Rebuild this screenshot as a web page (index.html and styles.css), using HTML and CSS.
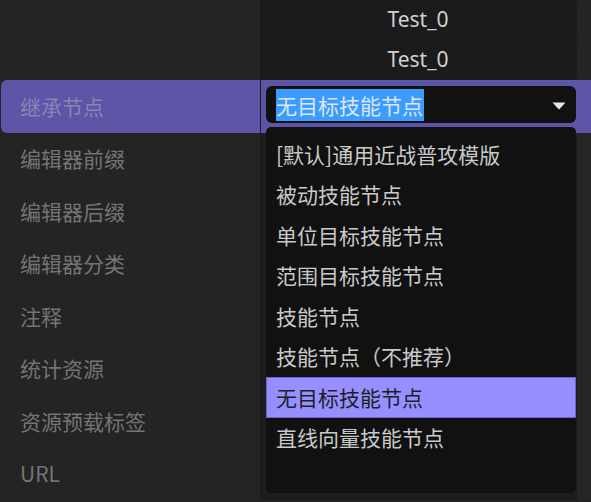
FILE: index.html
```html
<!DOCTYPE html>
<html lang="zh-CN">
<head>
<meta charset="utf-8">
<link rel="stylesheet" href="styles.css">
</head>
<body>
<div class="inspector">
  <div class="row row-top">
    <div class="label"></div>
    <div class="value value-top"><span class="value-text">Test_0</span></div>
    <div class="gutter"></div>
  </div>
  <div class="row row-top">
    <div class="label"></div>
    <div class="value value-top"><span class="value-text">Test_0</span></div>
    <div class="gutter"></div>
  </div>
  <div class="row row-selected">
    <div class="label">继承节点</div>
    <div class="value value-combo">
      <div class="combo">
        <span class="combo-text">无目标技能节点</span>
        <svg class="combo-arrow" width="14" height="9" viewBox="0 0 14 9"><path d="M0.5 1.5 H13.5 L7.6 8 Q7 8.6 6.4 8 Z" fill="#e6e6e6"/></svg>
      </div>
      <ul class="popup">
        <li class="item">[默认]通用近战普攻模版</li>
        <li class="item">被动技能节点</li>
        <li class="item">单位目标技能节点</li>
        <li class="item">范围目标技能节点</li>
        <li class="item">技能节点</li>
        <li class="item">技能节点（不推荐）</li>
        <li class="item item-active">无目标技能节点</li>
        <li class="item">直线向量技能节点</li>
      </ul>
    </div>
    <div class="gutter"></div>
  </div>
  <div class="row"><div class="label">编辑器前缀</div><div class="value"></div><div class="gutter"></div></div>
  <div class="row"><div class="label">编辑器后缀</div><div class="value"></div><div class="gutter"></div></div>
  <div class="row"><div class="label">编辑器分类</div><div class="value"></div><div class="gutter"></div></div>
  <div class="row"><div class="label">注释</div><div class="value"></div><div class="gutter"></div></div>
  <div class="row"><div class="label">统计资源</div><div class="value"></div><div class="gutter"></div></div>
  <div class="row"><div class="label">资源预载标签</div><div class="value"></div><div class="gutter"></div></div>
  <div class="row"><div class="label">URL</div><div class="value"></div><div class="gutter"></div></div>
</div>
</body>
</html>
```

FILE: styles.css
```css
html, body {
  margin: 0;
  padding: 0;
  background: #242424;
  overflow: hidden;
}
body {
  width: 591px;
  height: 502px;
  font-family: "Noto Sans CJK SC", "Noto Sans", sans-serif;
  font-size: 21px;
}
.inspector {
  display: flex;
  flex-direction: column;
}
.row {
  display: flex;
  height: 52.5px;
}
.row-top {
  height: 40px;
}
.label {
  width: 240px;
  padding-left: 20px;
  border-right: 1px solid #1a1a1a;
  color: #747474;
  display: flex;
  align-items: center;
  line-height: 1;
}
.value {
  width: 316px;
  background: #1d1d1d;
  position: relative;
}
.value-top {
  background: #1b1b1b;
  border-radius: 0 4px 4px 0;
  display: flex;
  align-items: center;
  justify-content: center;
}
.value-text {
  color: #d0d0d0;
  font-family: "Noto Sans", sans-serif;
  font-size: 21px;
  margin-top: -3px;
  margin-left: -2px;
}
.gutter {
  flex: 1;
  background: #262626;
}
.row-top .gutter {
  background: #242424;
}
.row-selected {
  background: #5c55a8;
  border-radius: 6px 0 0 6px;
  margin-left: 1px;
}
.row-selected .label {
  width: 240px;
  padding-left: 19px;
  color: #8a84b4;
}
.row-selected .value {
  background: transparent;
}
.row-selected .gutter {
  background: transparent;
}
.combo {
  margin: 6px 0 0 5px;
  height: 37px;
  padding: 0 10px;
  box-sizing: border-box;
  width: 310px;
  background: #111111;
  border-radius: 6px;
  display: flex;
  align-items: center;
  justify-content: space-between;
}
.combo-text {
  background: #3b9cff;
  color: #dfe6f2;
  height: 32px;
  line-height: 32px;
  padding: 0 1px 0 0;
}
.combo-arrow {
  margin-top: 1px;
}
.popup {
  position: absolute;
  left: 5px;
  top: 47px;
  width: 310px;
  height: 366px;
  margin: 0;
  padding: 7px 0 0 0;
  box-sizing: border-box;
  list-style: none;
  background: #111111;
  border-radius: 5px;
  z-index: 2;
}
.item {
  height: 40.5px;
  box-sizing: border-box;
  padding-left: 10px;
  display: flex;
  align-items: center;
  color: #c9c9c9;
  font-size: 21px;
  line-height: 1;
}
.item-active {
  background: #978eff;
  border: 1px solid #6c63c8;
  padding-left: 9px;
  color: #1f1f1f;
}
```
